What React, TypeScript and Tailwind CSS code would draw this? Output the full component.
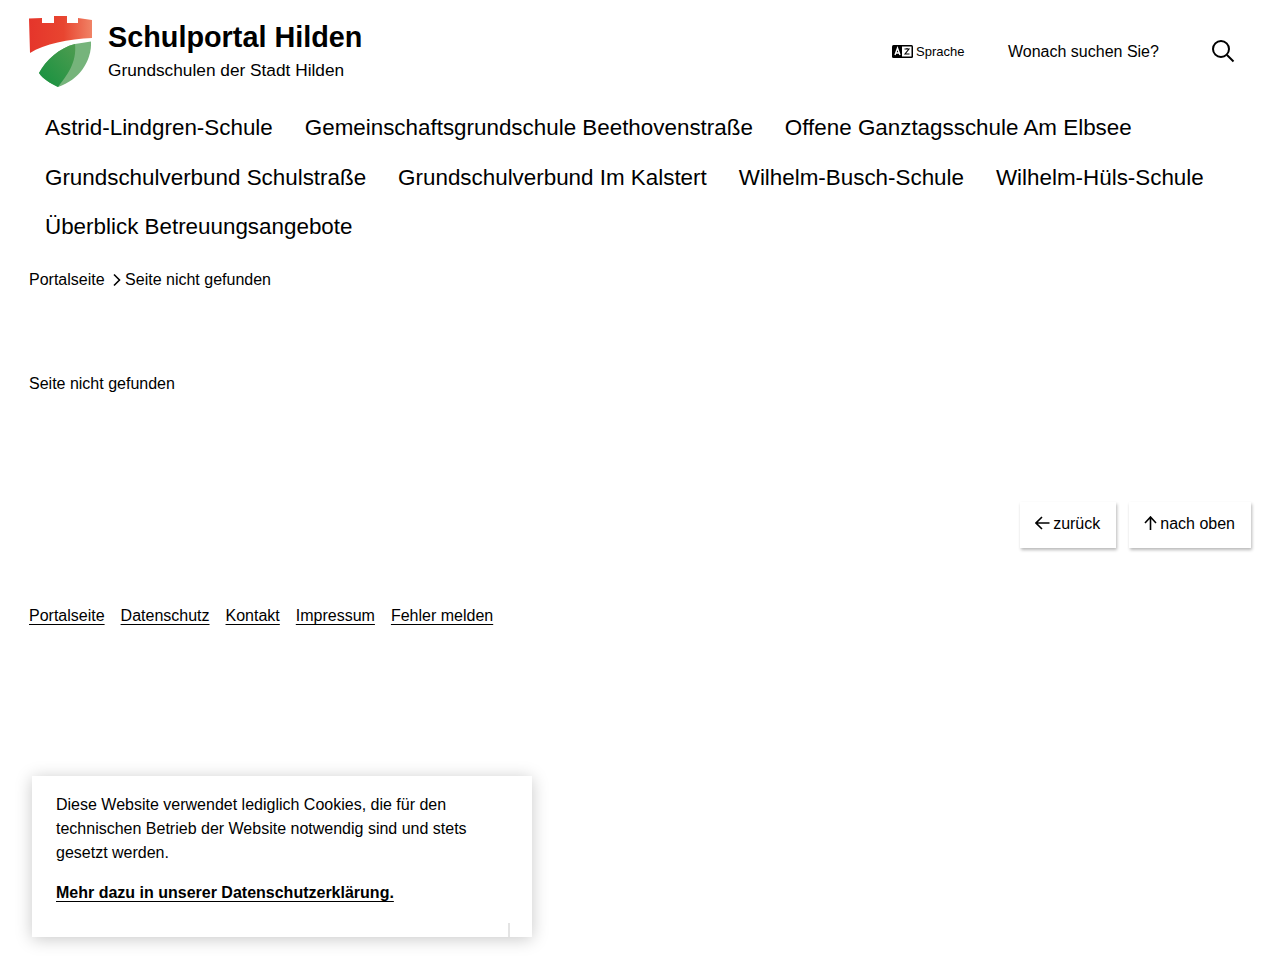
import React from "react";

function Logo() {
  return (
    <svg width="64" height="72" viewBox="0 0 64 72" className="block shrink-0">
      <defs>
        <linearGradient id="red" x1="0" y1="0" x2="1" y2="0">
          <stop offset="0" stopColor="#e5352b" />
          <stop offset="0.55" stopColor="#e84530" />
          <stop offset="1" stopColor="#f08366" />
        </linearGradient>
        <linearGradient id="green" x1="0" y1="1" x2="1" y2="0">
          <stop offset="0" stopColor="#14913f" />
          <stop offset="1" stopColor="#4f9c50" />
        </linearGradient>
      </defs>
      <path d="M0 3.5 L13 3 L13 8 L25 8 L25 1 L38 1 L38 8 L49 8 L49 3 L63 5 L63 23 C40 24 15 29 1 38 Z" fill="url(#red)" />
      <path d="M46 29 L62 26.5 C63 46 50 65 29 72 C21 68 14 64 10 58 C17 45 30 33 46 29 Z" fill="#76b47b" />
      <path d="M46 29 C30 33 17 45 10 58 C14 64 21 68 29 72 C38 60 48 48 46 29 Z" fill="url(#green)" />
    </svg>
  );
}

function LangIcon() {
  return (
    <svg width="21" height="13" viewBox="0 0 21 13" className="block">
      <rect x="0" y="0" width="21" height="13" rx="1.5" fill="#000" />
      <rect x="10" y="1.5" width="9.5" height="10" fill="#fff" />
      <path d="M3 10 L5.5 3 L8 10 M4 8 H7" stroke="#fff" strokeWidth="1.4" fill="none" />
      <path d="M12.5 4 H17 L13 9 H17.5 M15 3 V4" stroke="#000" strokeWidth="1.1" fill="none" />
    </svg>
  );
}

const nav = [
  ["Astrid-Lindgren-Schule", "Gemeinschaftsgrundschule Beethovenstraße", "Offene Ganztagsschule Am Elbsee"],
  ["Grundschulverbund Schulstraße", "Grundschulverbund Im Kalstert", "Wilhelm-Busch-Schule", "Wilhelm-Hüls-Schule"],
  ["Überblick Betreuungsangebote"],
];

const footer = ["Portalseite", "Datenschutz", "Kontakt", "Impressum", "Fehler melden"];

export default function App() {
  return (
    <div className="relative h-[960px] overflow-hidden bg-white text-black font-['Liberation_Sans',Arial,sans-serif] text-base leading-6">
      <header className="flex items-center justify-between pl-[29px] pr-[45px] pt-[15px]">
        <div className="flex items-center gap-[15px]">
          <Logo />
          <div>
            <div className="text-[28.8px] font-bold leading-[42px] -mt-[5px]">Schulportal Hilden</div>
            <div className="text-[17.28px] leading-[24px]">Grundschulen der Stadt Hilden</div>
          </div>
        </div>
        <div className="flex items-center mt-[1px]">
          <div className="flex items-center gap-[3.5px] text-[13px] translate-x-[2px]">
            <LangIcon />
            <span>Sprache</span>
          </div>
          <div className="ml-[43.5px] w-[205px] translate-x-[2px]">Wonach suchen Sie?</div>
          <svg width="24" height="24" viewBox="0 0 24 24" fill="none" stroke="#000" strokeWidth="2" className="block -mt-[2px]">
            <circle cx="10" cy="10" r="8" />
            <path d="M16 16 L22.5 22.5" />
          </svg>
        </div>
      </header>

      <nav className="pl-[45px] pt-[16px] text-[22.4px] leading-[49.5px]">
        {nav.map((row, i) => (
          <div key={i} className="flex gap-[32px] h-[49.5px]">
            {row.map((t) => (
              <a key={t} className="whitespace-nowrap">{t}</a>
            ))}
          </div>
        ))}
      </nav>

      <div className="flex items-center pl-[29px] mt-[16px]">
        <span>Portalseite</span>
        <svg width="8" height="14" viewBox="0 0 8 14" fill="none" stroke="#000" strokeWidth="1.6" className="block ml-[8px] mr-[4.5px]">
          <path d="M1 1.5 L6.5 7 L1 12.5" />
        </svg>
        <span>Seite nicht gefunden</span>
      </div>

      <p className="pl-[29px] mt-[80px]">Seite nicht gefunden</p>

      <div className="flex justify-end gap-[13px] pr-[29px] mt-[106px]">
        <a className="flex items-center h-[46px] pb-[2px] pl-[15px] pr-[16px] gap-[3px] bg-white shadow-[1px_2px_3px_rgba(0,0,0,0.28)]">
          <svg width="15" height="14" viewBox="0 0 15 14" fill="none" stroke="#000" strokeWidth="1.6" className="block -translate-y-px">
            <path d="M7 1 L1 7 L7 13 M1 7 H14.5" />
          </svg>
          <span>zurück</span>
        </a>
        <a className="flex items-center h-[46px] pb-[2px] pl-[15px] pr-[16px] gap-[2px] bg-white shadow-[1px_2px_3px_rgba(0,0,0,0.28)]">
          <svg width="14" height="14" viewBox="0 0 14 14" fill="none" stroke="#000" strokeWidth="1.6" className="block -translate-y-px">
            <path d="M1 7 L6.5 1 L12 7 M6.5 1 V14" />
          </svg>
          <span>nach oben</span>
        </a>
      </div>

      <div className="flex gap-[16px] pl-[29px] mt-[56px]">
        {footer.map((t) => (
          <a key={t} className="underline underline-offset-[3px] [text-decoration-skip-ink:none]">{t}</a>
        ))}
      </div>

      <div className="absolute left-[32px] top-[776px] w-[500px] h-[161px] bg-white px-[24px] pt-[17px] shadow-[0_2px_16px_rgba(0,0,0,0.22)]">
        <p className="leading-[24px]">
          Diese Website verwendet lediglich Cookies, die für den technischen Betrieb der Website notwendig sind und stets gesetzt werden.
        </p>
        <a className="block mt-[16px] font-bold underline underline-offset-[3px] [text-decoration-skip-ink:none]">Mehr dazu in unserer Datenschutzerklärung.</a>
        <div className="absolute left-[476px] bottom-0 w-[2px] h-[14px] bg-[#e4e4e4]"></div>
      </div>
    </div>
  );
}
